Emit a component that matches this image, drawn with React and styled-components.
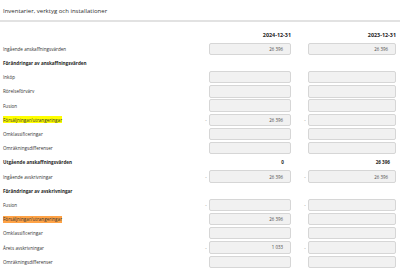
import React from "react";
import styled, { createGlobalStyle } from "styled-components";

const Global = createGlobalStyle`
  html, body { margin: 0; padding: 0; background: #ffffff; }
  body { font-family: "Open Sans", "Liberation Sans", sans-serif; color: #333333; }
`;

const Page = styled.div`
  width: 400px;
  height: 272px;
  overflow: hidden;
  box-sizing: border-box;
  padding: 0 4px 0 3px;
`;

const Title = styled.div`
  height: 20px;
  display: flex;
  align-items: center;
  font-size: 6px;
  color: #2e2e2e;
  box-sizing: border-box;
  padding-top: 1px;
`;

const Rule = styled.div`
  height: 2px;
  background: #e2e2e2;
  margin: 0 -4px 0 -3px;
`;

const Table = styled.div`
  display: grid;
  grid-template-columns: 1fr 88px 94px;
  column-gap: 11px;
  grid-auto-rows: 14.2px;
  padding-top: 5.6px;
`;

const HeadCell = styled.div`
  grid-column: ${(p) => p.$col};
  display: flex;
  align-items: center;
  justify-content: flex-end;
  font-size: 5.4px;
  font-weight: 700;
  color: #222;
`;

const Label = styled.div`
  grid-column: 1;
  display: flex;
  align-items: center;
  font-size: 4.6px;
  font-weight: ${(p) => (p.$bold ? 700 : 400)};
  color: ${(p) => (p.$bold ? "#1e1e1e" : "#333")};
  white-space: nowrap;
`;

const Mark = styled.span`
  background: ${(p) => p.$hl || "transparent"};
  padding: 0.5px 0;
`;

const Cell = styled.div`
  display: flex;
  align-items: center;
  justify-content: flex-end;
`;

const Minus = styled.span`
  flex: 1;
  text-align: center;
  font-size: 4.5px;
  color: #777;
`;

const Box = styled.div`
  width: ${(p) => p.$w}px;
  height: 12.3px;
  box-sizing: border-box;
  background: #f1f1f1;
  border: 1px solid #d6d6d6;
  border-radius: 2px;
  display: flex;
  align-items: center;
  justify-content: flex-end;
  padding-right: 7px;
  font-size: 4.4px;
  color: #4a4a4a;
`;

const Total = styled.div`
  display: flex;
  align-items: center;
  justify-content: flex-end;
  padding-right: ${(p) => p.$pr}px;
  font-size: 4.6px;
  font-weight: 700;
  color: #1e1e1e;
`;

const rows = [
  { label: "Ingående anskaffningsvärden", box: true, a: "26 396", b: "26 396" },
  { label: "Förändringar av anskaffningsvärden", bold: true },
  { label: "Inköp", box: true },
  { label: "Rörelseförvärv", box: true },
  { label: "Fusion", box: true },
  { label: "Försäljningar/utrangeringar", box: true, minus: true, a: "26 396", hl: "#ffff00" },
  { label: "Omklassificeringar", box: true },
  { label: "Omräkningsdifferenser", box: true },
  { label: "Utgående anskaffningsvärden", bold: true, total: true, a: "0", b: "26 396" },
  { label: "Ingående avskrivningar", box: true, minus: true, a: "26 396", b: "26 396" },
  { label: "Förändringar av avskrivningar", bold: true },
  { label: "Fusion", box: true, minus: true },
  { label: "Försäljningar/utrangeringar", box: true, a: "26 396", hl: "#ffa346" },
  { label: "Omklassificeringar", box: true },
  { label: "Årets avskrivningar", box: true, minus: true, a: "1 033" },
  { label: "Omräkningsdifferenser", box: true },
];

function ValueCell({ row, value, width }) {
  if (row.total) {
    return <Total $pr={width === 82 ? 7 : 6}>{value}</Total>;
  }
  if (!row.box) return <div />;
  return (
    <Cell>
      <Minus>{row.minus ? "-" : ""}</Minus>
      <Box $w={width}>{value || ""}</Box>
    </Cell>
  );
}

export default function App() {
  return (
    <Page>
      <Global />
      <Title>Inventarier, verktyg och installationer</Title>
      <Rule />
      <Table>
        <HeadCell $col={2}>2024-12-31</HeadCell>
        <HeadCell $col={3}>2023-12-31</HeadCell>
        {rows.map((r, i) => (
          <React.Fragment key={i}>
            <Label $bold={r.bold}>
              {r.hl ? <Mark $hl={r.hl}>{r.label}</Mark> : r.label}
            </Label>
            <ValueCell row={r} value={r.a} width={82} />
            <ValueCell row={r} value={r.b} width={88} />
          </React.Fragment>
        ))}
      </Table>
    </Page>
  );
}
